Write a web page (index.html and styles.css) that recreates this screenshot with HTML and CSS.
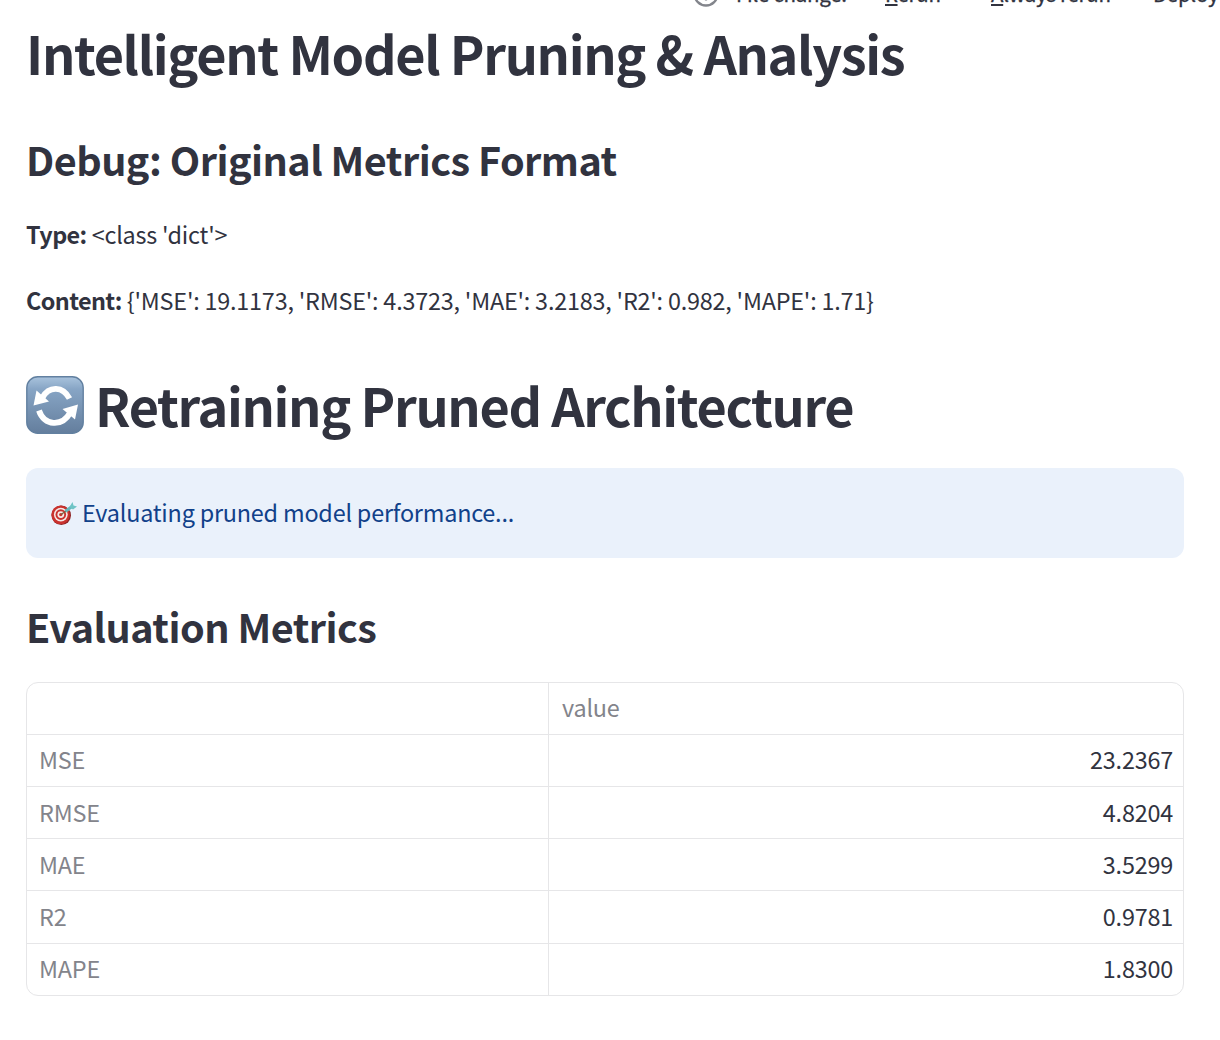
FILE: index.html
```html
<!DOCTYPE html>
<html lang="en">
<head>
<meta charset="utf-8">
<title>Intelligent Model Pruning &amp; Analysis</title>
<link rel="stylesheet" href="styles.css">
</head>
<body>
<header class="toolbar">
  <svg class="toolbar-icon" viewBox="0 0 26 26"><circle cx="13" cy="13" r="11.5" fill="none" stroke="#83858c" stroke-width="2.4"/><path d="M13 11.500v8" stroke="#83858c" stroke-width="2.2"/></svg>
  <span class="status">File change.</span>
  <span class="rerun"><u>R</u>erun</span>
  <span class="always"><u>A</u>lways rerun</span>
  <span class="deploy">Deploy</span>
</header>
<main class="content">
  <h1>Intelligent Model Pruning &amp; Analysis</h1>
  <h2 class="debug-title">Debug: Original Metrics Format</h2>
  <p><b>Type:</b> &lt;class 'dict'&gt;</p>
  <p><b>Content:</b> {'MSE': 19.1173, 'RMSE': 4.3723, 'MAE': 3.2183, 'R2': 0.982, 'MAPE': 1.71}</p>
  <h1 class="retrain-title">
    <svg class="retrain-icon" viewBox="0 0 58 58">
      <defs><linearGradient id="tile" x1="0" y1="0" x2="0" y2="1"><stop offset="0" stop-color="#a9c3dd"/><stop offset=".22" stop-color="#87a5c5"/><stop offset="1" stop-color="#647e9d"/></linearGradient></defs>
      <rect x=".8" y=".8" width="56.4" height="56.4" rx="11" fill="url(#tile)" stroke="#6280a0" stroke-width="1.4"/>
      <path d="M16.500 21.500C23 9.500 37 10 43.500 22.500" fill="none" stroke="#fff" stroke-width="5.800"/>
      <path d="M13 34.500C18 50 36 51 44 37" fill="none" stroke="#fff" stroke-width="5.800"/>
      <path d="M10.500 14.500L7.500 29.500L23 25.500ZM36.500 33L52 28.500L49 43.500Z" fill="#fff"/>
    </svg>
    <span>Retraining Pruned Architecture</span>
  </h1>
  <div class="info">
    <svg class="target-icon" viewBox="0 0 26 24">
      <circle cx="10.300" cy="13.300" r="9.700" fill="#8f2424"/>
      <circle cx="9.600" cy="12.800" r="9.300" fill="#c9322e"/>
      <circle cx="9.800" cy="12.600" r="6.900" fill="#f5e9e7"/>
      <circle cx="9.800" cy="12.600" r="5.300" fill="#c9322e"/>
      <circle cx="9.800" cy="12.600" r="3.400" fill="#f5e9e7"/>
      <circle cx="9.800" cy="12.600" r="1.700" fill="#c9322e"/>
      <path d="M10 12.500L18 7" stroke="#79643f" stroke-width="1.300"/>
      <path d="M14.500 9.300L21 4.500" stroke="#63b9bd" stroke-width="3"/>
      <path d="M18.500 5L21.500 0L22.500 3.500L26 4.500L22 7.500Z" fill="#6fc4c6"/>
    </svg>
    <span>Evaluating pruned model performance...</span>
  </div>
  <h2 class="metrics-title">Evaluation Metrics</h2>
  <div class="metrics">
    <div class="row"><span class="name"></span><span class="head">value</span></div>
    <div class="row"><span class="name">MSE</span><span class="value">23.2367</span></div>
    <div class="row"><span class="name">RMSE</span><span class="value">4.8204</span></div>
    <div class="row"><span class="name">MAE</span><span class="value">3.5299</span></div>
    <div class="row"><span class="name">R2</span><span class="value">0.9781</span></div>
    <div class="row"><span class="name">MAPE</span><span class="value">1.8300</span></div>
  </div>
</main>
</body>
</html>
```
FILE: styles.css
```css
* { box-sizing: border-box; }
body {
  margin: 0;
  height: 1040px;
  overflow: hidden;
  background: #fff;
  color: #31333f;
  font: 23.4px/40px "Noto Sans CJK SC", sans-serif;
  letter-spacing: -0.21px;
}
.toolbar {
  display: flex;
  align-items: flex-end;
  height: 17px;
  margin-top: -8px;
  padding-left: 693px;
  font-size: 20.5px;
  line-height: 20px;
  letter-spacing: -0.27px;
  white-space: nowrap;
  -webkit-text-stroke: 0.3px #31333f;
}
.toolbar u { text-decoration-thickness: 2px; text-underline-offset: 1.5px; }
.toolbar span { height: 20px; margin-bottom: 6px; flex: none; }
.toolbar-icon { width: 26px; height: 26px; margin-bottom: 2px; flex: none; }
.status { width: 149px; margin-left: 17px; }
.rerun { width: 106px; }
.always { width: 162px; }
.content { padding: 8px 36px 0 26px; }
h1, h2, p { margin: 0; }
h1 { font-size: 52.2px; line-height: 71px; letter-spacing: -1.34px; }
h2 { font-size: 39.6px; line-height: 54px; letter-spacing: -0.53px; }
b { letter-spacing: -0.6px; }
.debug-title { margin: 44px 0 28px; }
p { margin-bottom: 26px; }
.retrain-title { display: flex; gap: 11px; padding-top: 23px; }
.retrain-icon { width: 58px; height: 58px; margin-top: 7px; }
.info {
  display: flex;
  gap: 5px;
  height: 90px;
  margin-top: 28px;
  padding: 24px 25px;
  border-radius: 12px;
  background: #eaf1fb;
  color: #11418a;
}
.target-icon { width: 26px; height: 24px; margin-top: 10px; }
.metrics-title { margin: 41px 0 29px; }
.metrics {
  display: grid;
  grid-template-rows: 51px 52px 52px 52px 53px 52px;
  height: 314px;
  border: 1px solid #e6e6e8;
  border-radius: 12px;
}
.row { display: grid; grid-template-columns: 522px 1fr; }
.row + .row { border-top: 1px solid #e6e6e8; }
.row span { padding: 5px 10px 0 13px; color: #83848b; }
.row .head { padding-top: 4px; }
.row:nth-child(2) span, .row:nth-child(6) span { padding-top: 4px; }
.row .name { padding-left: 12px; border-right: 1px solid #e6e6e8; }
.row .value { text-align: right; color: #31333f; }
```
